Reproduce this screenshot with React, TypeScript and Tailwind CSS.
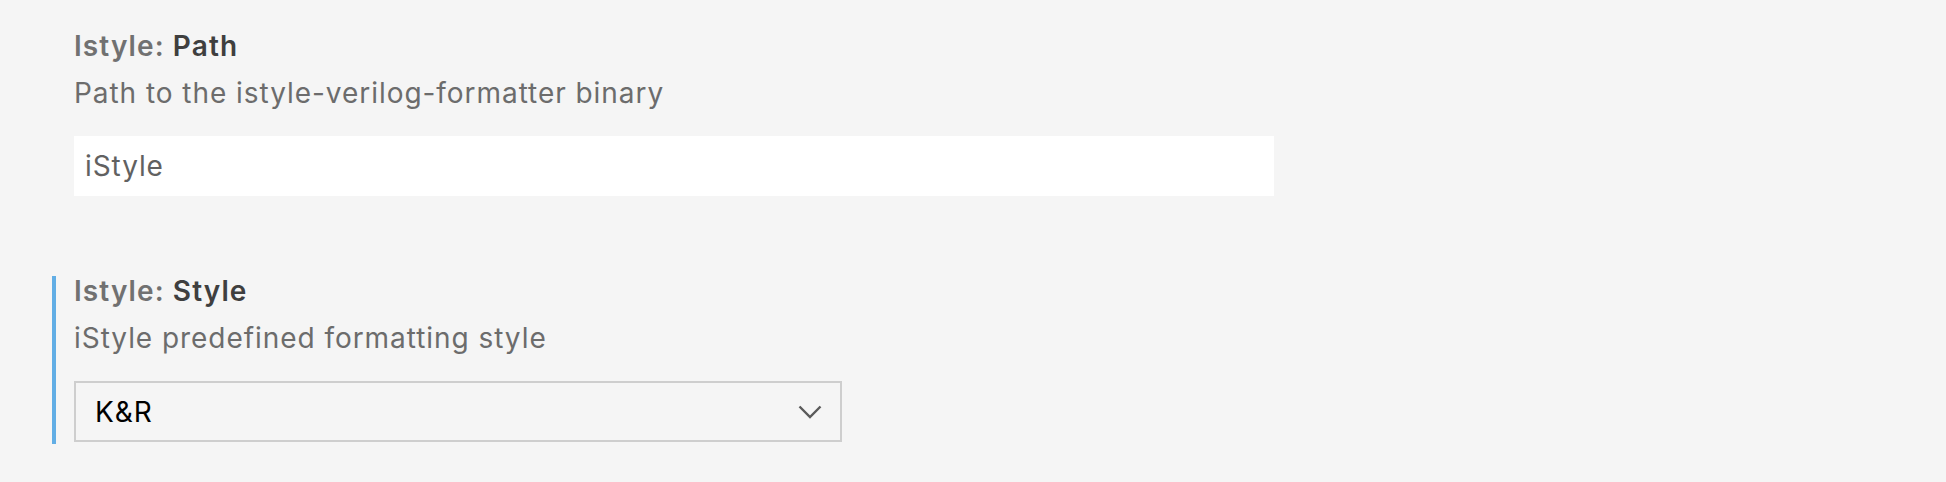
import React from 'react';

interface SettingProps {
  category: string;
  name: string;
  description: string;
  focused?: boolean;
  children: React.ReactNode;
}

const Setting: React.FC<SettingProps> = ({ category, name, description, focused, children }) => {
  return (
    <div
      className={`ml-[52px] border-l-4 pl-[18px] pb-[2px] ${
        focused ? 'border-[#62aee5]' : 'border-transparent'
      }`}
    >
      {/* Title */}
      <div className="text-[28px] leading-[30px] font-semibold tracking-[1.1px]">
        <span className="text-[#717171]">{category}: </span>
        <span className="text-[#3f3f3f]">{name}</span>
      </div>
      {/* Description */}
      <div className="mt-[17px] text-[28px] leading-[30px] tracking-[0.95px] text-[#6c6c6c]">
        {description}
      </div>
      <div className="mt-[28px]">{children}</div>
    </div>
  );
};

export default function App() {
  return (
    <div
      className="w-[1946px] h-[482px] bg-[#f5f5f5] pt-[31px] overflow-hidden"
      style={{ fontFamily: 'Inter, "Noto Sans", sans-serif' }}
    >
      <Setting category="Istyle" name="Path" description="Path to the istyle-verilog-formatter binary">
        <div className="w-[1200px] h-[60px] bg-white flex items-center pl-[11px] text-[28px] tracking-[0.9px] text-[#616161]">
          iStyle
        </div>
      </Setting>

      <div className="mt-[78px]">
        <Setting category="Istyle" name="Style" description="iStyle predefined formatting style" focused>
          <div className="w-[768px] h-[61px] border-2 border-[#cecece] flex items-center justify-between pl-[19px] pr-[18px] text-[28px] tracking-[0.9px] text-black">
            <span>K&amp;R</span>
            <svg width="24" height="14" viewBox="0 0 24 14" fill="none">
              <path d="M1.5 1.5 L12 12 L22.5 1.5" stroke="#5a5a5a" strokeWidth="2.4" />
            </svg>
          </div>
        </Setting>
      </div>
    </div>
  );
}
